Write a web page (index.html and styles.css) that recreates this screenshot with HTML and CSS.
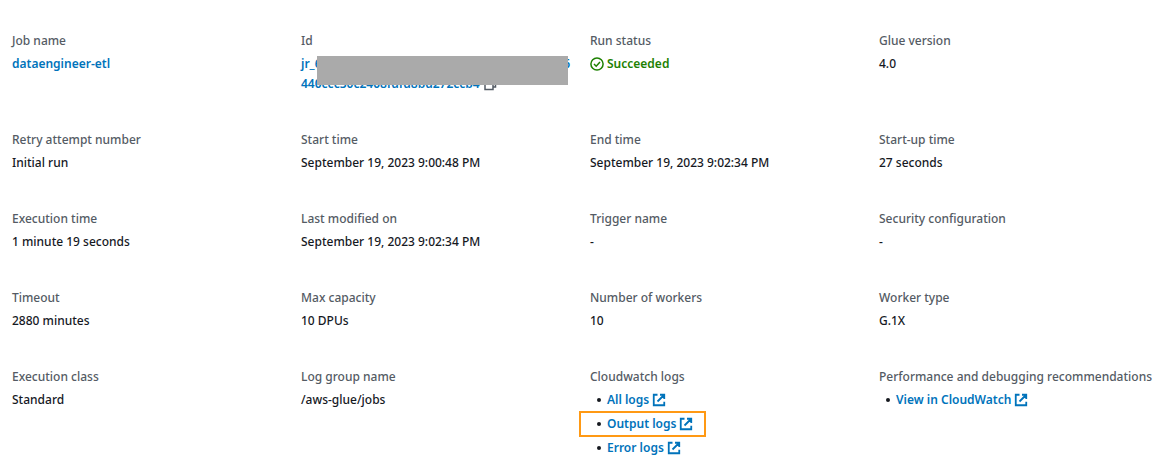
FILE: index.html
```
<!DOCTYPE html>
<html lang="en">
<head>
    <meta charset="UTF-8">
    <meta name="viewport" content="width=device-width, initial-scale=1.0">
    <title>Job run details</title>
    <link rel="stylesheet" href="styles.css">
</head>
<body>
    <!-- Shared icons -->
    <svg class="sprite" aria-hidden="true">
        <symbol id="icon-external" viewBox="0 0 14 14">
            <path d="M5.500 1.750H1.750V12.250H12.250V8.800M8 1.750H12.250V6M12.250 1.750L5.500 8.500" />
        </symbol>
    </svg>

    <dl class="details">
        <div class="field">
            <dt>Job name</dt>
            <dd><a href="#">dataengineer-etl</a></dd>
        </div>
        <div class="field">
            <dt>Id</dt>
            <dd class="run-id">
                <a href="#">
                    <span class="id-line"><span>jr_6</span><span>6</span></span>
                    <span>440ccc30c2408fdfd8bd272ccb4</span>
                </a>
                <button class="copy" aria-label="Copy id">
                    <svg class="icon" viewBox="0 0 14 14"><path d="M2 4.500h8v8H2zM5 4V1.500h7.500v8.500H10" /></svg>
                </button>
                <div class="redacted"></div>
            </dd>
        </div>
        <div class="field">
            <dt>Run status</dt>
            <dd class="status">
                <svg class="icon" viewBox="0 0 14 14"><circle cx="7" cy="7" r="6.100" /><path d="M4 7l2.200 2.200L10 5" /></svg>
                Succeeded
            </dd>
        </div>
        <div class="field">
            <dt>Glue version</dt>
            <dd>4.0</dd>
        </div>

        <div class="field">
            <dt>Retry attempt number</dt>
            <dd>Initial run</dd>
        </div>
        <div class="field">
            <dt>Start time</dt>
            <dd>September 19, 2023 9:00:48 PM</dd>
        </div>
        <div class="field">
            <dt>End time</dt>
            <dd>September 19, 2023 9:02:34 PM</dd>
        </div>
        <div class="field">
            <dt>Start-up time</dt>
            <dd>27 seconds</dd>
        </div>

        <div class="field">
            <dt>Execution time</dt>
            <dd>1 minute 19 seconds</dd>
        </div>
        <div class="field">
            <dt>Last modified on</dt>
            <dd>September 19, 2023 9:02:34 PM</dd>
        </div>
        <div class="field">
            <dt>Trigger name</dt>
            <dd>-</dd>
        </div>
        <div class="field">
            <dt>Security configuration</dt>
            <dd>-</dd>
        </div>

        <div class="field">
            <dt>Timeout</dt>
            <dd>2880 minutes</dd>
        </div>
        <div class="field">
            <dt>Max capacity</dt>
            <dd>10 DPUs</dd>
        </div>
        <div class="field">
            <dt>Number of workers</dt>
            <dd>10</dd>
        </div>
        <div class="field">
            <dt>Worker type</dt>
            <dd>G.1X</dd>
        </div>

        <div class="field">
            <dt>Execution class</dt>
            <dd>Standard</dd>
        </div>
        <div class="field">
            <dt>Log group name</dt>
            <dd>/aws-glue/jobs</dd>
        </div>
        <div class="field">
            <dt>Cloudwatch logs</dt>
            <dd>
                <ul class="links">
                    <li><a href="#">All logs <svg class="icon"><use href="#icon-external" /></svg></a></li>
                    <li class="highlighted"><a href="#">Output logs <svg class="icon"><use href="#icon-external" /></svg></a></li>
                    <li><a href="#">Error logs <svg class="icon"><use href="#icon-external" /></svg></a></li>
                </ul>
            </dd>
        </div>
        <div class="field">
            <dt>Performance and debugging recommendations</dt>
            <dd>
                <ul class="links">
                    <li><a href="#">View in CloudWatch <svg class="icon"><use href="#icon-external" /></svg></a></li>
                </ul>
            </dd>
        </div>
    </dl>
</body>
</html>
```
FILE: styles.css
```
body {
    margin: 0;
    background-color: #ffffff;
    color: #16191f;
    font-family: "Noto Sans", "Open Sans", sans-serif;
    font-size: 12px;
    font-weight: 500;
    line-height: 20px;
}

.sprite {
    display: none;
}

/* Four column grid of label and value pairs */
.details {
    display: grid;
    grid-template-columns: repeat(4, minmax(0, 1fr));
    gap: 36px 20px;
    margin: 0;
    padding: 31px 14px 12px 12px;
}

dt {
    margin-bottom: 3px;
    color: #545b64;
    white-space: nowrap;
}

dd {
    margin: 0;
}

a {
    color: #0073bb;
    font-weight: 600;
    text-decoration: none;
}

.icon {
    width: 14px;
    height: 14px;
    fill: none;
    stroke: currentColor;
    stroke-width: 1.5;
}

/* Run id with its value blocked out */
.run-id {
    position: relative;
}

.id-line {
    display: flex;
    justify-content: space-between;
}

.copy {
    padding: 0;
    border: none;
    background: none;
    color: #545b64;
    line-height: 20px;
}

.copy .icon {
    vertical-align: middle;
}

.redacted {
    position: absolute;
    top: 2px;
    left: 16px;
    right: 2px;
    height: 29px;
    background-color: #aaaaaa;
}

.status {
    display: flex;
    align-items: center;
    gap: 3px;
    color: #1d8102;
    font-weight: 600;
}

/* Bulleted log links */
.links {
    display: flex;
    flex-direction: column;
    gap: 4px;
    margin: 0;
    padding-left: 7px;
    list-style: none;
}

.links li {
    position: relative;
    display: flex;
    align-items: center;
    gap: 6px;
}

.links li::before {
    content: "";
    width: 4px;
    height: 4px;
    border-radius: 50%;
    background-color: #16191f;
}

.links a {
    display: flex;
    align-items: center;
    gap: 3px;
}

.links .icon {
    stroke-width: 1.8;
}

/* Orange frame around the log link to open */
.highlighted::after {
    content: "";
    position: absolute;
    top: -3px;
    left: -18px;
    width: 123px;
    height: 22px;
    border: 2px solid #ff9914;
}
```
